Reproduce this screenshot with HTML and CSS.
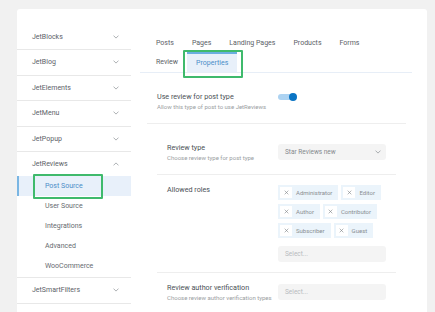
FILE: index.html
```html
<!DOCTYPE html>
<html>
<head>
<meta charset="utf-8">
<link rel="stylesheet" href="styles.css">
</head>
<body>
<div class="page">
  <div class="card">
    <aside class="sidebar">
      <div class="nav-item"><span>JetBlocks</span><svg class="chev" viewBox="0 0 6 4"><path d="M0.5 0.6 L3 3.1 L5.5 0.6"/></svg></div>
      <div class="nav-item"><span>JetBlog</span><svg class="chev" viewBox="0 0 6 4"><path d="M0.5 0.6 L3 3.1 L5.5 0.6"/></svg></div>
      <div class="nav-item"><span>JetElements</span><svg class="chev" viewBox="0 0 6 4"><path d="M0.5 0.6 L3 3.1 L5.5 0.6"/></svg></div>
      <div class="nav-item"><span>JetMenu</span><svg class="chev" viewBox="0 0 6 4"><path d="M0.5 0.6 L3 3.1 L5.5 0.6"/></svg></div>
      <div class="nav-item"><span>JetPopup</span><svg class="chev" viewBox="0 0 6 4"><path d="M0.5 0.6 L3 3.1 L5.5 0.6"/></svg></div>
      <div class="nav-group">
        <div class="nav-head"><span>JetReviews</span><svg class="chev" viewBox="0 0 6 4"><path d="M0.5 3.4 L3 0.9 L5.5 3.4"/></svg></div>
        <div class="sub active">Post Source</div>
        <div class="sub">User Source</div>
        <div class="sub">Integrations</div>
        <div class="sub">Advanced</div>
        <div class="sub">WooCommerce</div>
      </div>
      <div class="nav-item"><span>JetSmartFilters</span><svg class="chev" viewBox="0 0 6 4"><path d="M0.5 0.6 L3 3.1 L5.5 0.6"/></svg></div>
    </aside>
    <main class="content">
      <div class="tabs">
        <div class="tab-row first">
          <span class="tab">Posts</span>
          <span class="tab">Pages</span>
          <span class="tab">Landing Pages</span>
          <span class="tab">Products</span>
          <span class="tab">Forms</span>
        </div>
        <div class="tab-row second">
          <span class="tab">Review</span>
          <span class="tab active">Properties</span>
        </div>
      </div>
      <div class="section">
        <div class="row top-row">
          <div class="label-col">
            <div class="label">Use review for post type</div>
            <div class="desc">Allow this type of post to use JetReviews</div>
          </div>
          <div class="control">
            <span class="toggle"><span class="knob"></span></span>
          </div>
        </div>
        <div class="subsection">
          <div class="row">
            <div class="label-col">
              <div class="label">Review type</div>
              <div class="desc">Choose review type for post type</div>
            </div>
            <div class="control">
              <div class="select"><span>Star Reviews new</span><svg class="chev" viewBox="0 0 6 4"><path d="M0.5 0.6 L3 3.1 L5.5 0.6"/></svg></div>
            </div>
          </div>
          <div class="row roles-row">
            <div class="label-col">
              <div class="label">Allowed roles</div>
            </div>
            <div class="control">
              <div class="tags">
                <span class="tag"><span class="x"><svg viewBox="0 0 6 6"><path d="M0.8 0.8 L5.2 5.2 M5.2 0.8 L0.8 5.2"/></svg></span>Administrator</span>
                <span class="tag"><span class="x"><svg viewBox="0 0 6 6"><path d="M0.8 0.8 L5.2 5.2 M5.2 0.8 L0.8 5.2"/></svg></span>Editor</span>
                <span class="tag"><span class="x"><svg viewBox="0 0 6 6"><path d="M0.8 0.8 L5.2 5.2 M5.2 0.8 L0.8 5.2"/></svg></span>Author</span>
                <span class="tag"><span class="x"><svg viewBox="0 0 6 6"><path d="M0.8 0.8 L5.2 5.2 M5.2 0.8 L0.8 5.2"/></svg></span>Contributor</span>
                <span class="tag"><span class="x"><svg viewBox="0 0 6 6"><path d="M0.8 0.8 L5.2 5.2 M5.2 0.8 L0.8 5.2"/></svg></span>Subscriber</span>
                <span class="tag"><span class="x"><svg viewBox="0 0 6 6"><path d="M0.8 0.8 L5.2 5.2 M5.2 0.8 L0.8 5.2"/></svg></span>Guest</span>
              </div>
              <div class="select placeholder"><span>Select...</span></div>
            </div>
          </div>
          <div class="row">
            <div class="label-col">
              <div class="label">Review author verification</div>
              <div class="desc">Choose review author verification types</div>
            </div>
            <div class="control">
              <div class="select placeholder"><span>Select...</span></div>
            </div>
          </div>
        </div>
      </div>
    </main>
  </div>
</div>
</body>
</html>
```

FILE: styles.css
```css
html, body {
  margin: 0;
  background: #f1f1f1;
  font-family: Roboto, "Liberation Sans", sans-serif;
}

.page {
  height: 312px;
  box-sizing: border-box;
  padding: 9px 8px 0 17px;
  overflow: hidden;
}

.card {
  display: flex;
  background: #ffffff;
  border-radius: 3px 3px 0 0;
  min-height: 330px;
}

/* Sidebar */
.sidebar {
  width: 114px;
  flex-shrink: 0;
  padding-top: 15.5px;
}

.chev {
  width: 6px;
  height: 4px;
  fill: none;
  stroke: #8a8f94;
  stroke-width: 0.7;
}

.nav-item,
.nav-head {
  display: flex;
  align-items: center;
  justify-content: space-between;
  box-sizing: border-box;
  padding: 0 12px 0 15px;
  font-size: 7px;
  color: #5b6167;
}

.nav-item {
  height: 25.5px;
  border-bottom: 1px solid #e8e8e8;
}

.nav-group {
  border-bottom: 1px solid #e8e8e8;
  padding-bottom: 1px;
}

.nav-head {
  height: 24px;
}

.sub {
  height: 20px;
  display: flex;
  align-items: center;
  padding-left: 28px;
  font-size: 7px;
  color: #666b70;
}

.sub.active {
  position: relative;
  background: #e8f0fa;
  color: #4a8dc8;
  box-shadow: inset 2px 0 0 #7ab6e3;
}

.sub.active::after {
  content: "";
  position: absolute;
  left: 16px;
  top: -2px;
  width: 70px;
  height: 25px;
  box-sizing: border-box;
  border: 2px solid #3fba6c;
  border-radius: 1px;
}

/* Content */
.content {
  flex: 1;
  padding: 25px 15px 0 9px;
}

.tabs {
  padding-left: 7px;
  border-bottom: 1px solid #e7eef7;
}

.tab-row {
  display: flex;
}

.tab {
  padding: 0 9px;
  font-size: 7px;
  color: #5b6167;
}

.tab-row.first .tab {
  line-height: 18px;
}

.tab-row.second .tab {
  line-height: 20px;
}

.tab-row.second .tab.active {
  position: relative;
  line-height: 18px;
  border-top: 2px solid #6aaee0;
  background: #e8f0fa;
  color: #4a8dc8;
}

.tab.active::after {
  content: "";
  position: absolute;
  left: -4px;
  top: -4px;
  width: 60px;
  height: 28px;
  box-sizing: border-box;
  border: 2px solid #3fba6c;
  border-radius: 1px;
}

.section {
  margin: 0 6px 0 7px;
}

.row {
  display: flex;
  padding: 10px 10px 12px;
  border-bottom: 1px solid #eeeeee;
}

.top-row {
  padding-top: 19px;
}

.roles-row {
  padding-bottom: 10px;
}

.label-col {
  width: 121px;
  flex-shrink: 0;
}

.subsection {
  margin: 0 10px;
  padding-top: 9px;
}

.subsection .label-col {
  width: 111px;
}

.label {
  font-size: 7.2px;
  line-height: 10px;
  color: #4a5056;
}

.desc {
  font-size: 6px;
  line-height: 9px;
  color: #9a9ea2;
}

.control {
  flex: 1;
}

.toggle {
  position: relative;
  display: block;
  width: 17px;
  height: 6px;
  margin-top: 2px;
  border-radius: 3px;
  background: #add3f2;
}

.knob {
  position: absolute;
  right: -2px;
  top: -1px;
  width: 8px;
  height: 8px;
  border-radius: 50%;
  background: #0a74c4;
}

.select {
  height: 16px;
  margin-top: 1px;
  box-sizing: border-box;
  display: flex;
  align-items: center;
  justify-content: space-between;
  padding: 0 5px 0 7px;
  border-radius: 3px;
  background: #f4f4f4;
  font-size: 6.5px;
  color: #85898d;
}

.select.placeholder {
  color: #b8bbbe;
}

.tags {
  display: flex;
  flex-wrap: wrap;
  gap: 4px 3px;
  margin-bottom: 8px;
}

.tag {
  height: 15px;
  box-sizing: border-box;
  display: flex;
  align-items: center;
  gap: 4px;
  padding: 0 6px 0 2px;
  background: #ebf4fb;
  font-size: 6px;
  color: #8a8e92;
}

.tag .x {
  width: 12px;
  height: 11px;
  display: flex;
  align-items: center;
  justify-content: center;
  background: #ffffff;
}

.tag .x svg {
  width: 5px;
  height: 5px;
  fill: none;
  stroke: #7b7f83;
  stroke-width: 0.7;
}
```
